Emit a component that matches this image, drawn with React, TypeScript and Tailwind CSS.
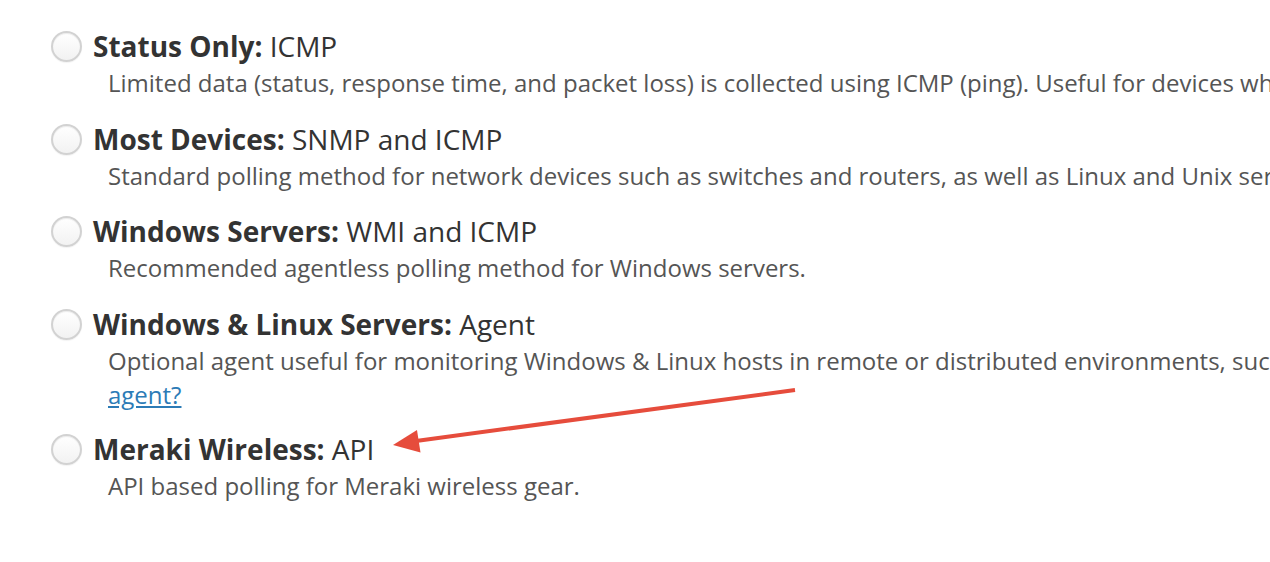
import React from "react";

type Option = {
  name: string;
  method: string;
  desc: string;
  link?: string;
};

const options: Option[] = [
  {
    name: "Status Only:",
    method: "ICMP",
    desc: "Limited data (status, response time, and packet loss) is collected using ICMP (ping). Useful for devices where SNMP is not available.",
  },
  {
    name: "Most Devices:",
    method: "SNMP and ICMP",
    desc: "Standard polling method for network devices such as switches and routers, as well as Linux and Unix servers.",
  },
  {
    name: "Windows Servers:",
    method: "WMI and ICMP",
    desc: "Recommended agentless polling method for Windows servers.",
  },
  {
    name: "Windows & Linux Servers:",
    method: "Agent",
    desc: "Optional agent useful for monitoring Windows & Linux hosts in remote or distributed environments, such as cloud servers. What is an",
    link: "agent?",
  },
  {
    name: "Meraki Wireless:",
    method: "API",
    desc: "API based polling for Meraki wireless gear.",
  },
];

function Radio() {
  return (
    <span className="mt-[3px] size-[31px] shrink-0 rounded-full border-2 border-[#d2d2d2] bg-gradient-to-b from-white to-[#f2f2f2] shadow-[inset_0_1px_1px_rgba(0,0,0,0.08),0_1px_1px_rgba(0,0,0,0.05)]" />
  );
}

export default function App() {
  return (
    <main
      className="relative h-[562px] w-[1270px] overflow-hidden bg-white text-[#333]"
      style={{ fontFamily: '"Open Sans", "Noto Sans", sans-serif' }}
    >
      {/* clipped line from the section above */}
      <p className="-mt-[36px] whitespace-nowrap pl-[108px] text-[24px] leading-[35px] text-[#555]">
        All data is collected for the most common monitoring protocols applied to a device when polling methods are selected.
      </p>

      <div className="mt-[29px] flex flex-col gap-[20.5px] pl-[51px]">
        {options.map((o) => (
          <div key={o.name} className="flex gap-[11px]">
            <Radio />
            <div className="min-w-0">
              <p className="whitespace-nowrap text-[28px] leading-[37px] text-[#333]">
                <span className="font-bold">{o.name}</span> {o.method}
              </p>
              <p className="whitespace-nowrap pl-[15px] text-[24px] leading-[35px] text-[#555]">
                {o.desc}
              </p>
              {o.link && (
                <p className="pl-[15px] text-[24px] leading-[33px]">
                  <a href="#" className="text-[#2c7bb6] underline">
                    {o.link}
                  </a>
                </p>
              )}
            </div>
          </div>
        ))}
      </div>

      {/* annotation arrow */}
      <svg className="pointer-events-none absolute left-0 top-0" width="1270" height="562">
        <line x1="795" y1="390" x2="416" y2="441" stroke="#e64c3c" strokeWidth="4" />
        <polygon points="393,445 420.5,452.5 417,430" fill="#e64c3c" />
      </svg>
    </main>
  );
}
